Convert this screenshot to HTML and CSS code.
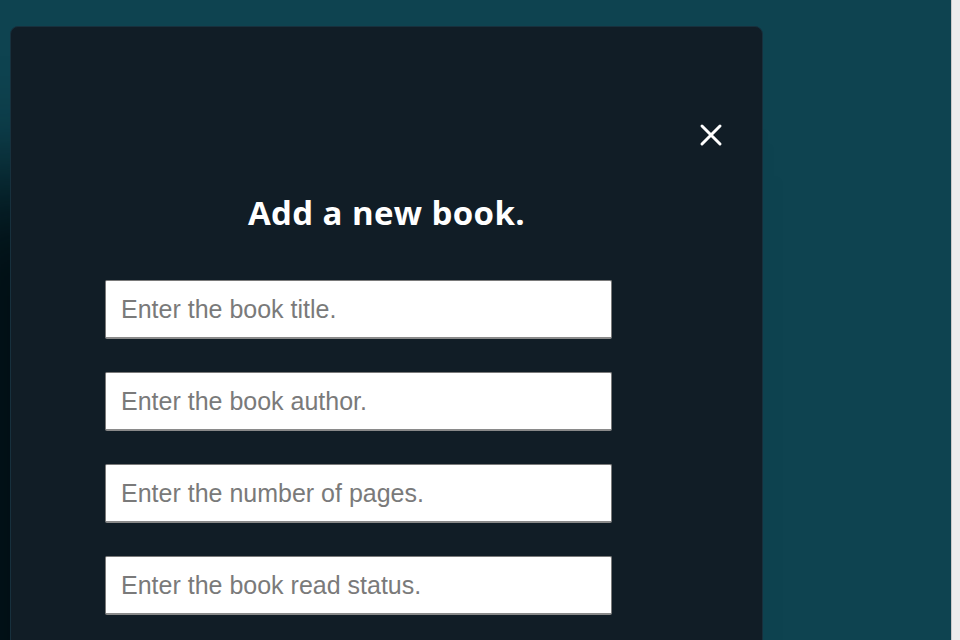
FILE: index.html
```html
<!DOCTYPE html>
<html lang="en">
<head>
<meta charset="utf-8">
<title>Add a new book</title>
<link rel="stylesheet" href="styles.css">
</head>
<body>
<div class="page">
  <main class="viewport">
    <section class="modal">
      <div class="modal-head">
        <button class="close" type="button" aria-label="Close">
          <svg viewBox="0 0 24 24" width="24" height="24"><path d="M3 3 L21 21 M21 3 L3 21" stroke="#fff" stroke-width="3" stroke-linecap="round" fill="none"/></svg>
        </button>
      </div>
      <h1 class="title">Add a new book.</h1>
      <form class="book-form">
        <input class="field" type="text" placeholder="Enter the book title.">
        <input class="field" type="text" placeholder="Enter the book author.">
        <input class="field" type="text" placeholder="Enter the number of pages.">
        <input class="field" type="text" placeholder="Enter the book read status.">
      </form>
    </section>
  </main>
  <div class="scrollbar"></div>
</div>
</body>
</html>
```
FILE: styles.css
```css
html, body {
  margin: 0;
  height: 100%;
}
body {
  background: #0e4350;
  overflow: hidden;
  font-family: "Liberation Sans", Arial, sans-serif;
}
.page {
  display: flex;
  height: 100%;
}
.viewport {
  flex: 1;
  padding: 26px 0 0 10px;
  overflow: hidden;
}
.modal {
  width: 753px;
  min-height: 700px;
  background: #111d26;
  border: 1px solid #17303d;
  border-radius: 8px;
  box-shadow: -100px 150px 100px rgba(0, 10, 14, 0.9);
  box-sizing: border-box;
}
.modal-head {
  display: flex;
  justify-content: flex-end;
  padding: 96px 39px 0 0;
}
.close {
  background: none;
  border: 0;
  padding: 0;
  width: 24px;
  height: 24px;
  cursor: pointer;
  display: flex;
}
.title {
  margin: 46px 0 0;
  text-align: center;
  color: #fff;
  font-family: "Open Sans", Lato, sans-serif;
  font-weight: 700;
  font-size: 33px;
  line-height: 40px;
  letter-spacing: 0.4px;
}
.book-form {
  display: flex;
  flex-direction: column;
  gap: 33px;
  padding: 47px 0 0 94px;
}
.field {
  width: 507px;
  height: 59px;
  box-sizing: border-box;
  border: 1px solid #7a7a7a;
  border-bottom: 2px solid #8a8a8a;
  border-radius: 2px;
  background: #fff;
  padding: 0 15px;
  font-family: "Liberation Sans", Arial, sans-serif;
  font-size: 25px;
  color: #222;
}
.field::placeholder {
  color: #7a7a7a;
}
.scrollbar {
  width: 8px;
  flex: none;
  background: #ececec;
  border-left: 1px solid #c9c9c9;
}
```
